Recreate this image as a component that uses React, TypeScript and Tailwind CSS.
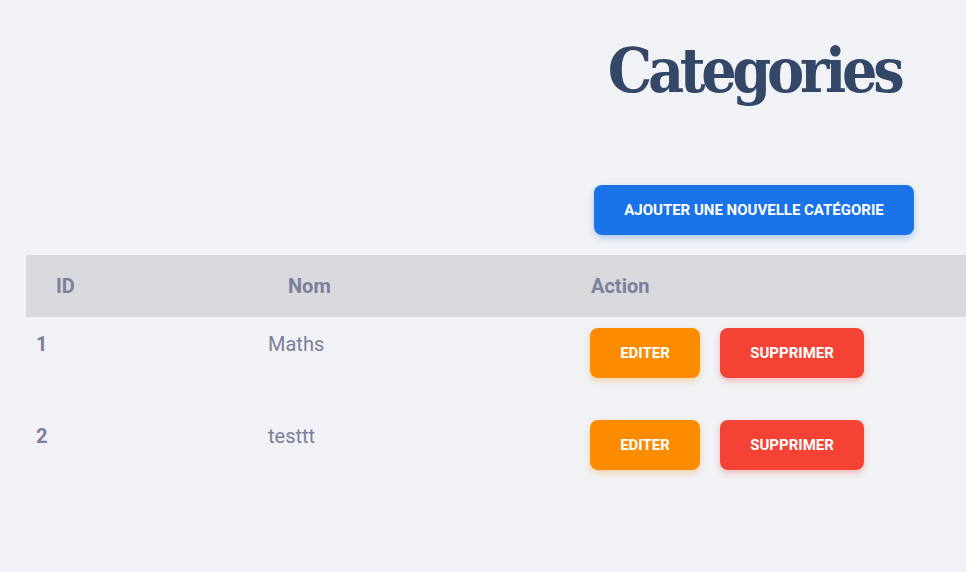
const categories = [
  { id: 1, nom: "Maths" },
  { id: 2, nom: "testtt" },
];

export default function App() {
  return (
    <div className="h-[572px] w-[966px] overflow-hidden bg-[#f0f2f5] font-['Roboto',sans-serif]">
      {/* Header block */}
      <div className="ml-[594px] flex w-[320px] flex-col items-center pt-[35px]">
        <h1 className="whitespace-nowrap font-['DejaVu_Serif_Condensed','DejaVu_Serif',serif] text-[62px] font-bold leading-[72px] tracking-[-4.3px] text-[#344767]">
          Categories
        </h1>
        <button
          type="button"
          className="mt-[78px] h-[50px] w-[320px] rounded-lg bg-[#1a73e8] text-[15px] font-bold uppercase text-white shadow-[0_3px_6px_rgba(26,115,232,0.3)]"
        >
          Ajouter une nouvelle catégorie
        </button>
      </div>

      {/* Table */}
      <div className="ml-[26px] mt-[20px] w-[1100px]">
        <div className="grid h-[62px] grid-cols-[232px_303px_1fr] items-center bg-[#d8d9dd] text-[20px] font-bold text-[#7b809a]">
          <div className="pl-[30px]">ID</div>
          <div className="pl-[30px]">Nom</div>
          <div className="pl-[30px]">Action</div>
        </div>
        {categories.map((c) => (
          <div
            key={c.id}
            className="grid h-[92px] grid-cols-[232px_303px_1fr] items-start text-[20px] text-[#7b809a]"
          >
            <div className="pl-[10px] pt-[12px] font-bold">{c.id}</div>
            <div className="pl-[10px] pt-[12px]">{c.nom}</div>
            <div className="flex gap-[20px] pl-[29px] pt-[11px]">
              <button
                type="button"
                className="h-[50px] w-[110px] rounded-lg bg-[#fb8c00] text-[15px] font-bold uppercase text-white shadow-[0_3px_6px_rgba(251,140,0,0.3)]"
              >
                Editer
              </button>
              <button
                type="button"
                className="h-[50px] w-[144px] rounded-lg bg-[#f44335] text-[15px] font-bold uppercase text-white shadow-[0_3px_6px_rgba(244,67,53,0.3)]"
              >
                Supprimer
              </button>
            </div>
          </div>
        ))}
      </div>
    </div>
  );
}
